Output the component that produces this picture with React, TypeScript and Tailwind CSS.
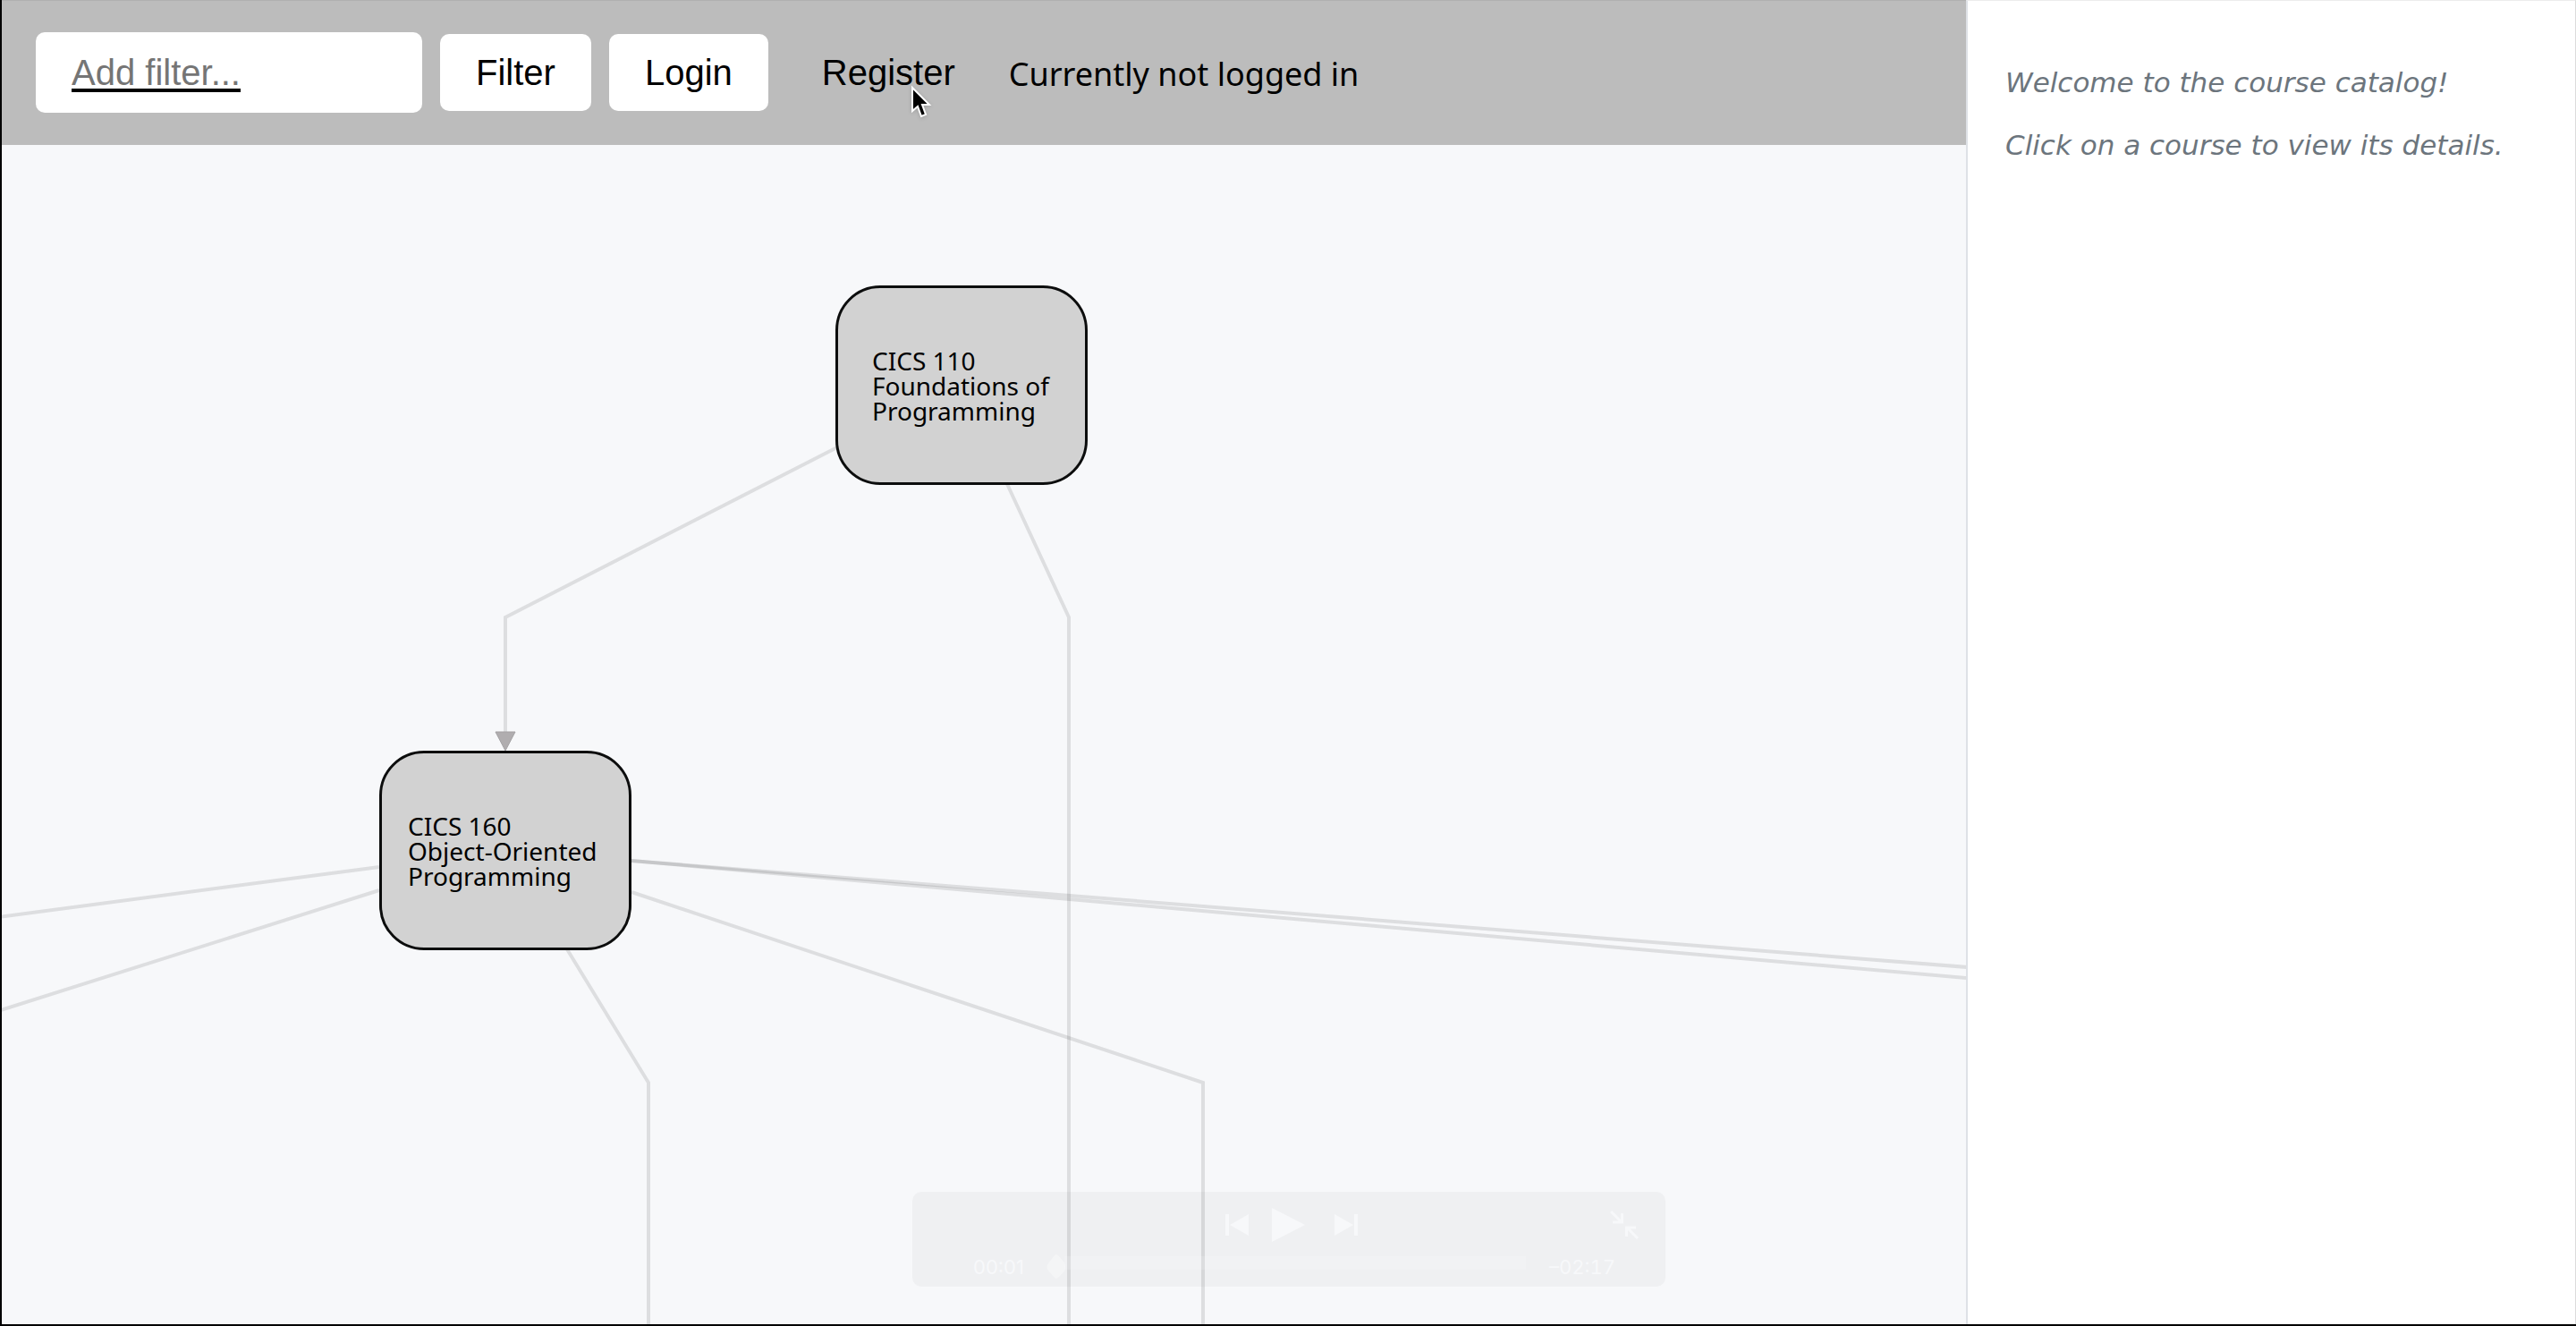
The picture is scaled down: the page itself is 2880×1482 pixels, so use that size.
import React from "react";

type Course = {
  id: string;
  label: string;
  box: string;
};

const courses: Course[] = [
  {
    id: "cics-110",
    label: "CICS 110\nFoundations of\nProgramming",
    box: "left-[932px] top-[157px] pl-[38px]",
  },
  {
    id: "cics-160",
    label: "CICS 160\nObject-Oriented\nProgramming",
    box: "left-[422px] top-[677px] pl-[29px]",
  },
];

const edges = [
  "M1073 430 L934 501 L565 690 V820",
  "M1126 541 L1195 690 V1600",
  "M424 969 L-40 1030",
  "M424 995 L-40 1142",
  "M706 962 L2300 1089",
  "M706 962 L2300 1102",
  "M706 997 L1345 1210 V1600",
  "M634 1061 L725 1210 V1600",
];

function Edges() {
  return (
    <svg className="absolute inset-0 h-full w-full" aria-hidden="true">
      <g transform="translate(-2 -162)">
        <g fill="none" stroke="#000" strokeOpacity="0.1" strokeWidth="4">
          {edges.map((d) => (
            <path key={d} d={d} />
          ))}
        </g>
        <path d="M554 818 H576 L565 839 Z" fill="#b0adaf" stroke="#a3a1a3" strokeWidth="1" />
      </g>
    </svg>
  );
}

function CourseNode({ course }: { course: Course }) {
  return (
    <button
      type="button"
      className={
        "absolute flex h-[223px] w-[282px] items-center rounded-[50px] border-3 border-[#0c0d0d] bg-[#d2d2d2] text-left text-[28px] leading-7 text-black " +
        course.box
      }
    >
      <span className="whitespace-pre">{course.label}</span>
    </button>
  );
}

function Toolbar() {
  const button = "h-[86px] rounded-[10px] px-10 font-['Liberation_Sans',Arial,sans-serif]";
  return (
    <header className="flex h-[162px] items-center gap-5 border-t border-[#b0b0b0] bg-[#bcbcbc] pb-px pl-[38px] text-[40px] text-black">
      <input
        type="text"
        aria-label="Add filter"
        placeholder="Add filter..."
        className="h-[90px] w-[432px] rounded-[10px] bg-white px-10 font-['Liberation_Sans',Arial,sans-serif] underline decoration-black decoration-4 underline-offset-4 placeholder:text-[#757575]"
      />
      <button type="button" className={button + " bg-white"}>
        Filter
      </button>
      <button type="button" className={button + " bg-white"}>
        Login
      </button>
      <span className="relative">
        <button type="button" className={button}>
          Register
        </button>
        <Cursor />
      </span>
      <p className="pt-1 text-[36px] whitespace-nowrap">Currently not logged in</p>
    </header>
  );
}

function Cursor() {
  return (
    <svg
      viewBox="0 0 26 40"
      className="absolute top-[57px] left-[139px] h-10 w-[26px] drop-shadow-sm"
      aria-hidden="true"
    >
      <path
        d="M2 3 V29 L8 24 L12 35 L17 33 L13 22 H21 Z"
        fill="#000"
        stroke="#fff"
        strokeWidth="2"
      />
    </svg>
  );
}

function Player() {
  return (
    <section
      aria-label="Playback controls"
      className="absolute bottom-[42px] left-1/2 flex h-[106px] w-[842px] -translate-x-1/2 flex-col justify-between rounded-[10px] bg-black/[0.033] pt-[18px] pr-[56px] pb-[8px] pl-[68px] font-[Inter,sans-serif] text-[22px] leading-[28px] text-[#f7f8fa]"
    >
      <div className="grid grid-cols-[1fr_auto_1fr] items-center">
        <span />
        <div className="flex items-center gap-[26px] pr-[6px]">
          <button type="button" aria-label="Previous">
            <svg viewBox="0 0 26 24" className="h-6 w-[26px]" fill="currentColor">
              <path d="M0 0 H4 V24 H0 Z M26 0 V24 L5 12 Z" />
            </svg>
          </button>
          <button type="button" aria-label="Play">
            <svg viewBox="0 0 37 38" className="h-[38px] w-[37px]" fill="currentColor">
              <path d="M0 0 L37 19 L0 38 Z" />
            </svg>
          </button>
          <button type="button" aria-label="Next" className="ml-[7px]">
            <svg viewBox="0 0 26 24" className="h-6 w-[26px]" fill="currentColor">
              <path d="M0 0 L21 12 L0 24 Z M22 0 H26 V24 H22 Z" />
            </svg>
          </button>
        </div>
        <button type="button" aria-label="Exit full screen" className="-mr-[26px] justify-self-end">
          <svg
            viewBox="0 0 32 32"
            className="h-8 w-8"
            fill="none"
            stroke="currentColor"
            strokeWidth="3"
          >
            <path d="M1 1 L13 13 M3 13 H13.500 V3 M31 31 L19 19 M29 19 H18.500 V29" />
          </svg>
        </button>
      </div>
      <div className="flex items-center justify-between">
        <span>00:01</span>
        <svg viewBox="0 0 536 28" className="h-7 w-[536px]" aria-hidden="true">
          <path d="M20 2 H536 V17 H20 Z" fill="#fff" fillOpacity="0.16" />
          <path
            d="M9 1 Q11 -1 13 1 L20 9 Q22 14 20 19 L13 26 Q11 28 9 26 L2 18 Q-1 14 2 10 Z"
            fill="#fff"
            fillOpacity="0.35"
          />
        </svg>
        <span className="tabular-nums">–02:17</span>
      </div>
    </section>
  );
}

export default function App() {
  return (
    <div className="relative flex min-h-screen overflow-hidden border-b-2 border-l-2 border-black bg-[#f7f8fa] font-['Noto_Sans','Lucida_Grande',sans-serif]">
      <main className="flex min-w-0 flex-1 flex-col">
        <Toolbar />
        <div className="relative flex-1 overflow-hidden">
          <Edges />
          {courses.map((course) => (
            <CourseNode key={course.id} course={course} />
          ))}
        </div>
      </main>
      <aside className="w-[682px] shrink-0 border-t border-r border-l-2 border-t-[#ececec] border-r-[#dcdcdc] border-l-[#dee1e6] bg-white px-[42px] pt-[71px] font-['DejaVu_Sans',sans-serif] text-[31px] leading-[40px] text-[#6c757d] italic">
        <p>Welcome to the course catalog!</p>
        <p className="mt-[30px]">Click on a course to view its details.</p>
      </aside>
      <Player />
    </div>
  );
}
